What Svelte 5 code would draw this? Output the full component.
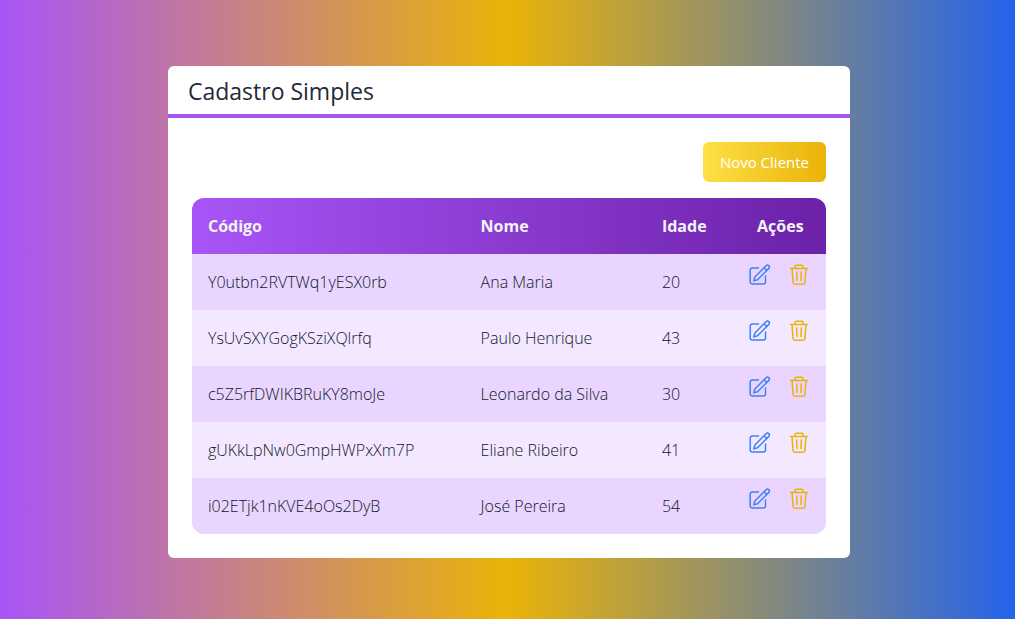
<script>
  const clients = [
    { id: 'Y0utbn2RVTWq1yESX0rb', name: 'Ana Maria', age: 20 },
    { id: 'YsUvSXYGogKSziXQlrfq', name: 'Paulo Henrique', age: 43 },
    { id: 'c5Z5rfDWIKBRuKY8moJe', name: 'Leonardo da Silva', age: 30 },
    { id: 'gUKkLpNw0GmpHWPxXm7P', name: 'Eliane Ribeiro', age: 41 },
    { id: 'i02ETjk1nKVE4oOs2DyB', name: 'José Pereira', age: 54 }
  ];
</script>

<main>
  <section class="card">
    <h1>Cadastro Simples</h1>
    <div class="content">
      <button class="new" type="button">Novo Cliente</button>
      <table>
        <colgroup>
          <col class="code" /><col class="name" /><col class="age" /><col class="actions" />
        </colgroup>
        <thead>
          <tr><th>Código</th><th>Nome</th><th>Idade</th><th class="center">Ações</th></tr>
        </thead>
        <tbody>
          {#each clients as client (client.id)}
            <tr>
              <td>{client.id}</td>
              <td>{client.name}</td>
              <td>{client.age}</td>
              <td class="tools">
                <div class="buttons">
                  <button class="icon edit" type="button" aria-label="Editar {client.name}">
                    <svg viewBox="0 0 24 24">
                      <path d="M10.500 6H4.200A2 2 0 0 0 2.200 8V20A2 2 0 0 0 4.200 22H15.500A2 2 0 0 0 17.500 20V14" />
                      <path d="M18 3.700a1.900 1.900 0 0 1 2.900 2.700L9.500 17.700L5.800 18.900L6.900 15Z M15.900 5.800l2.900 2.700" />
                    </svg>
                  </button>
                  <button class="icon remove" type="button" aria-label="Excluir {client.name}">
                    <svg viewBox="0 0 24 24">
                      <path d="M2.500 6.500h17M4 6.500l1.100 14.200a1.700 1.700 0 0 0 1.700 1.500h8.400a1.700 1.700 0 0 0 1.700-1.500L18 6.500M7 6.500V4.800a1.500 1.500 0 0 1 1.500-1.500h5a1.500 1.500 0 0 1 1.500 1.500v1.700M8.700 10l.3 8.500M13.300 10l-.3 8.500" />
                    </svg>
                  </button>
                </div>
              </td>
            </tr>
          {/each}
        </tbody>
      </table>
    </div>
  </section>
</main>

<style>
  :global(body) { margin: 0; }
  main {
    box-sizing: border-box;
    min-height: 100vh;
    padding: 5px 0 0 3px;
    display: flex;
    align-items: center;
    justify-content: center;
    color: #111827;
    font: 300 16px/24px "Open Sans", "Noto Sans", sans-serif;
    background: linear-gradient(to right, #a855f7, #eab308, #2563eb);
  }
  .card { width: 67.4%; background: #fff; border-radius: 6px; }
  h1 {
    margin: 0;
    padding: 9px 20px 7px;
    border-bottom: 4px solid #a855f7;
    color: #1f2937;
    font-size: 23px;
    line-height: 32px;
    font-weight: 400;
  }
  .content { display: flex; flex-direction: column; padding: 24px; }
  .new {
    align-self: flex-end;
    margin-bottom: 16px;
    padding: 8px 17px;
    border: 0;
    border-radius: 6px;
    color: #fff;
    font: inherit;
    font-size: 15px;
    font-weight: 400;
    background: linear-gradient(to right, #fde047, #eab308);
  }
  table { width: 100%; table-layout: fixed; border-spacing: 0; border-radius: 12px; overflow: hidden; }
  .code { width: 43%; }
  .name { width: 28.6%; }
  .age { width: 14%; }
  .actions { width: 14.4%; }
  thead { color: #f3f4f6; background: linear-gradient(to right, #a855f7, #6b21a8); }
  th, td { padding: 16px; text-align: left; }
  th { font-weight: 700; }
  .center { text-align: center; padding: 0; }
  tbody tr { background: #f3e8ff; }
  tbody tr:nth-child(odd) { background: #e9d5ff; }
  .tools { padding: 0; vertical-align: top; }
  .buttons { display: flex; justify-content: center; }
  .icon { display: flex; margin: 0; padding: 8px; border: 0; background: none; }
  .edit { color: #3b82f6; }
  .remove { color: #eab308; }
  svg { width: 24px; height: 24px; fill: none; stroke: currentColor; stroke-width: 1.5; stroke-linecap: round; stroke-linejoin: round; }
</style>
